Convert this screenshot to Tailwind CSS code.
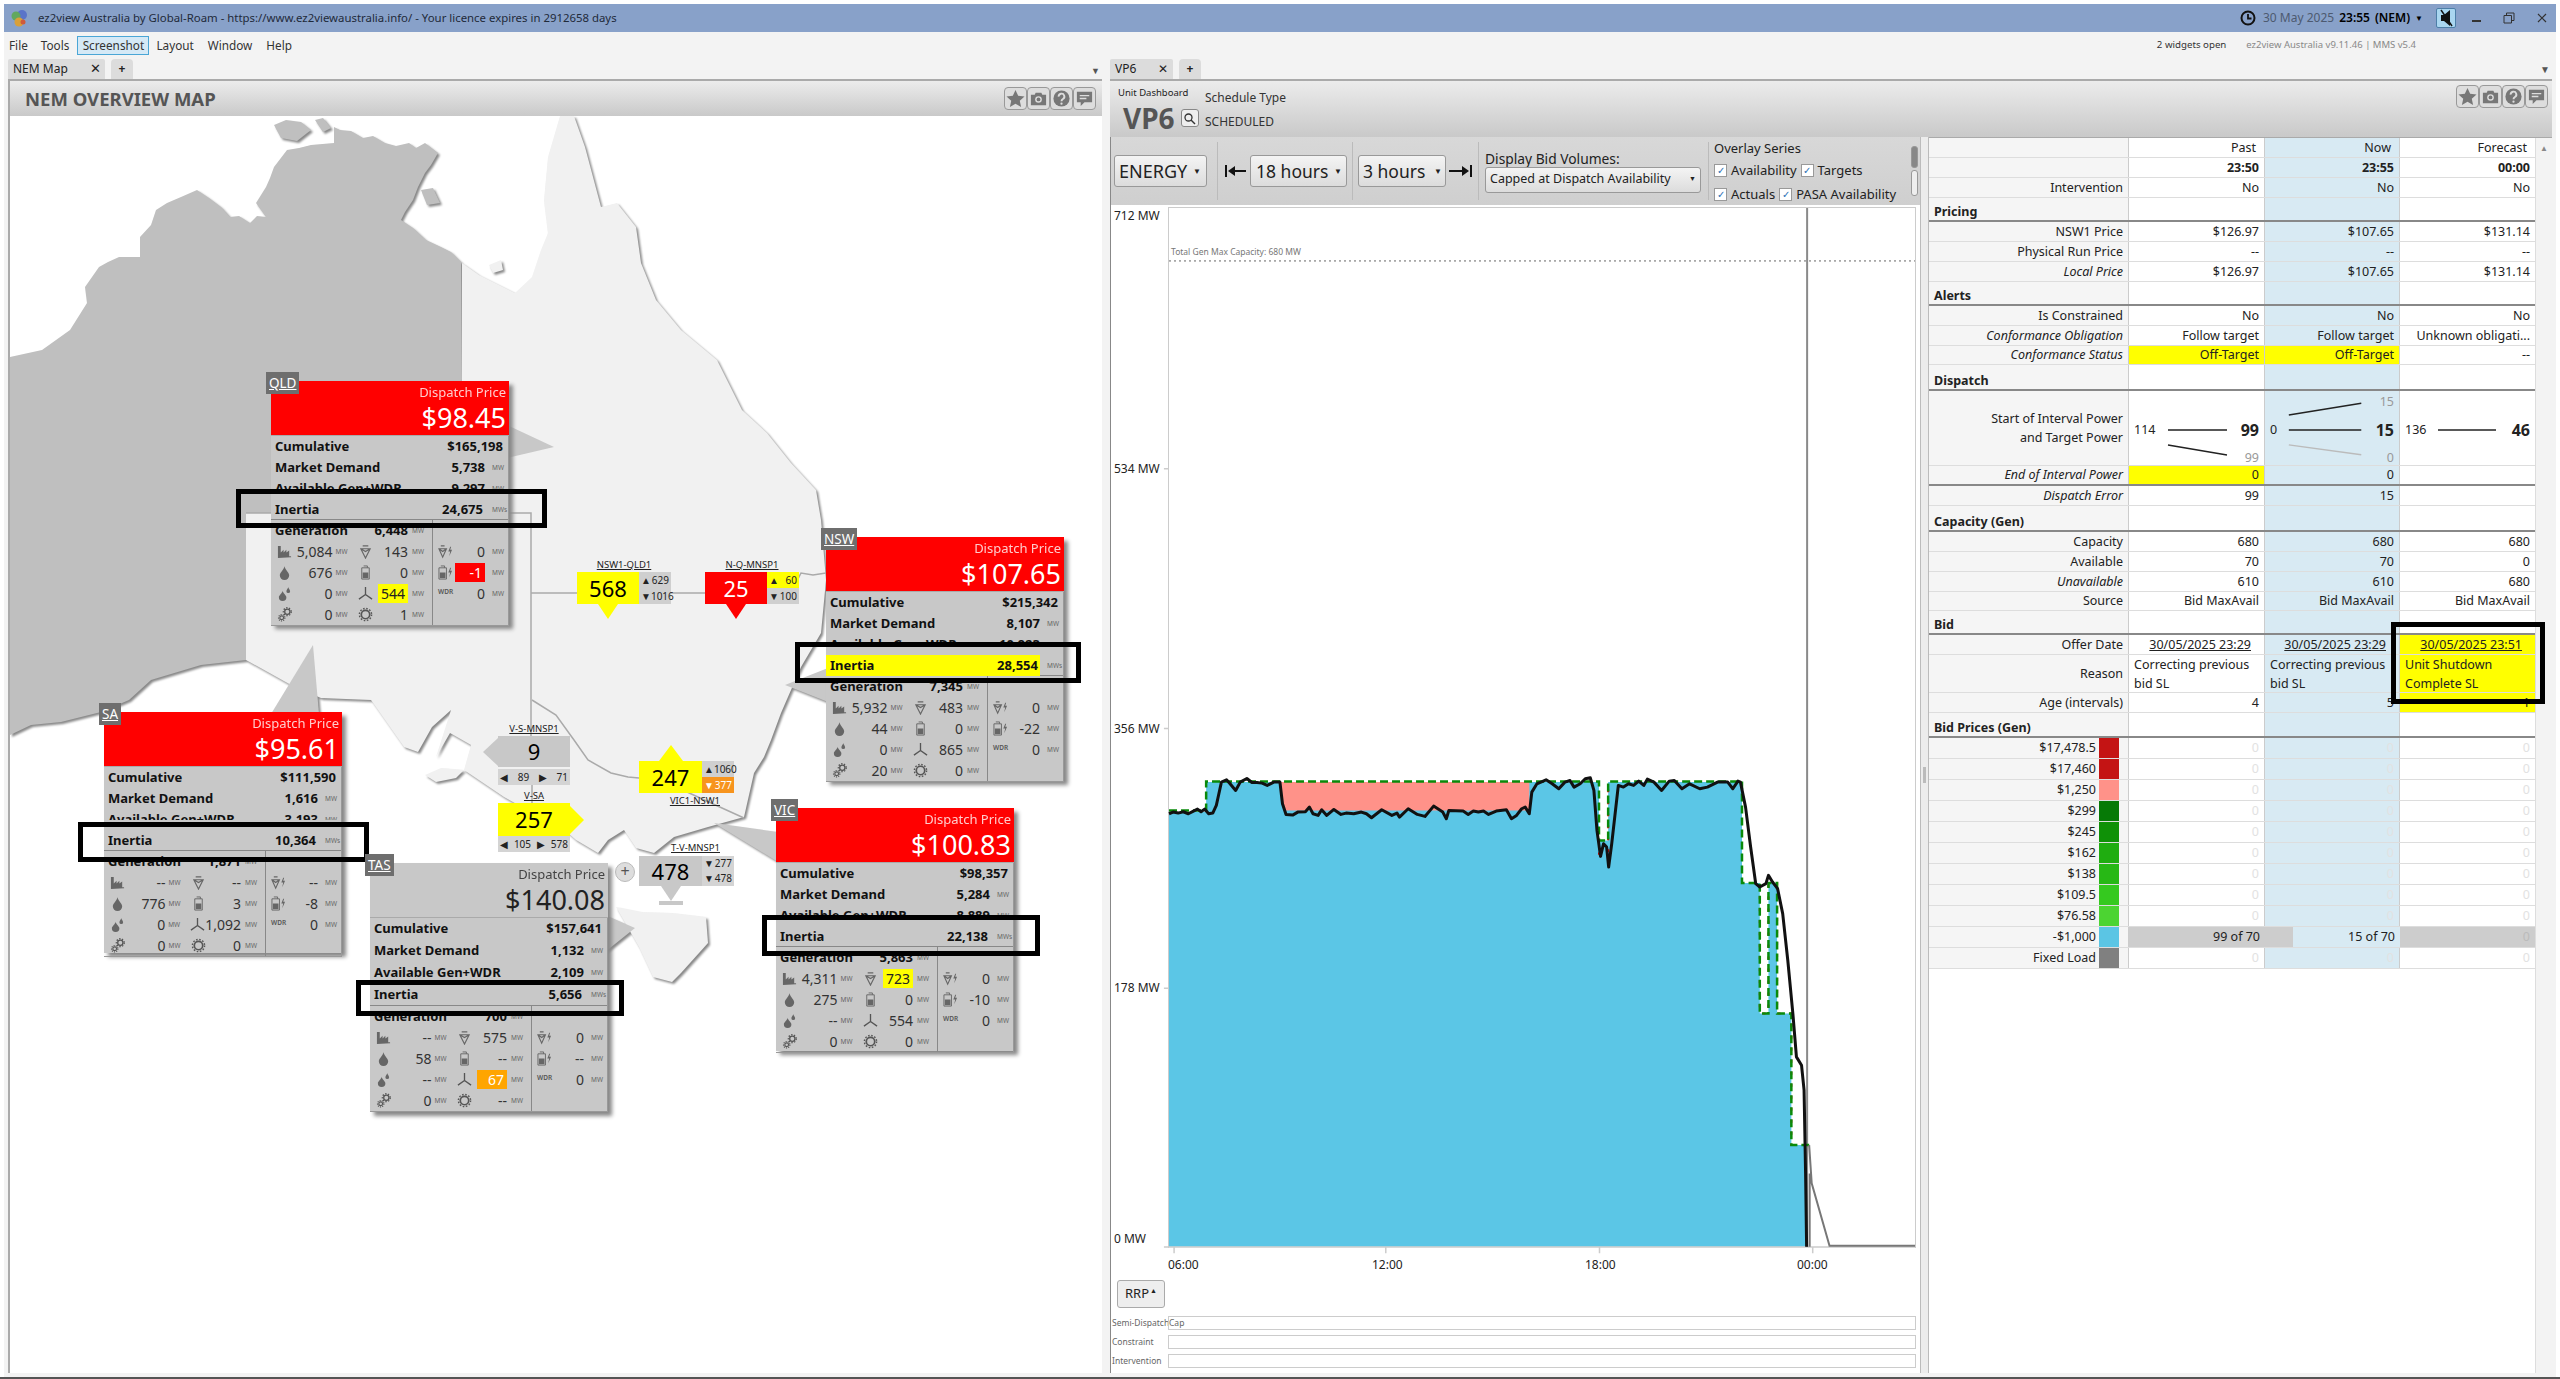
<!DOCTYPE html>
<html lang="en">
<head>
<meta charset="UTF-8">
<title>ez2view Australia</title>
<script src="https://cdn.jsdelivr.net/npm/@tailwindcss/browser@4"></script>
</head>
<body class="w-[2560px] h-[1379px] overflow-hidden bg-white font-['Noto_Sans',sans-serif] text-[#222]">

<!-- shared icons -->
<svg class="hidden">
  <symbol id="i-coal" viewBox="0 0 16 16"><path fill="#666" d="M1 15V2h3v7l3-3v3l3-3v3l3-2v6h2v1z"/></symbol>
  <symbol id="i-ocgt" viewBox="0 0 16 16"><path fill="none" stroke="#666" stroke-width="1.2" d="M3 5h10l-5 10zM3 5l5 3 5-3M5 2h6"/></symbol>
  <symbol id="i-ocgtb" viewBox="0 0 16 16"><path fill="none" stroke="#666" stroke-width="1.2" d="M1 5h8l-4 9zM1 5l4 3 4-3M3 2h4"/><path fill="#666" d="M13 3l-2 5h2l-1 5 3-7h-2l1-3z"/></symbol>
  <symbol id="i-hydro" viewBox="0 0 16 16"><path fill="#666" d="M8 1C8 4 3 8 3 11a5 5 0 0 0 10 0C13 8 8 4 8 1z"/></symbol>
  <symbol id="i-batt" viewBox="0 0 16 16"><path fill="none" stroke="#666" d="M4 3h8v12H4zM6 1h4v2"/><path fill="#666" d="M5 8h6v6H5z"/></symbol>
  <symbol id="i-battb" viewBox="0 0 16 16"><path fill="none" stroke="#666" d="M1 3h8v12H1zM3 1h4v2"/><path fill="#666" d="M2 8h6v6H2z"/><path fill="#666" d="M13 3l-2 5h2l-1 5 3-7h-2l1-3z"/></symbol>
  <symbol id="i-liquid" viewBox="0 0 16 16"><path fill="#666" d="M6 5C6 7 2 10 2 12a4 4 0 0 0 8 0C10 10 6 7 6 5zM12 1c0 1.500-2 3-2 4.500a2 2 0 0 0 4 0C14 4 12 2.500 12 1z"/></symbol>
  <symbol id="i-wind" viewBox="0 0 16 16"><path fill="none" stroke="#555" stroke-width="1.400" d="M8 9V1M8 9l-7 5M8 9l7 5"/></symbol>
  <symbol id="i-gears" viewBox="0 0 16 16"><g fill="none" stroke="#555"><circle cx="11" cy="5" r="2.800" stroke-width="1.400"/><circle cx="11" cy="5" r="4.200" stroke-width="1.400" stroke-dasharray="1.500 1.500"/><circle cx="5" cy="11.500" r="2" stroke-width="1.200"/><circle cx="5" cy="11.500" r="3.400" stroke-width="1.200" stroke-dasharray="1.200 1.200"/></g></symbol>
  <symbol id="i-solar" viewBox="0 0 16 16"><g fill="none" stroke="#555"><circle cx="8" cy="8" r="4.500" stroke-width="1.800"/><circle cx="8" cy="8" r="6.500" stroke-width="1.500" stroke-dasharray="1.700 1.700"/></g></symbol>
  <symbol id="i-star" viewBox="0 0 20 20"><path fill="#777" d="M10 1l2.800 6.200 6.700.7-5 4.500 1.400 6.600L10 15.600 4.100 19l1.400-6.600-5-4.500 6.700-.7z"/></symbol>
  <symbol id="i-cam" viewBox="0 0 20 20"><path fill="#777" d="M2 6h4l1-2h6l1 2h4v11H2z"/><circle cx="10" cy="11" r="3.500" fill="#ddd"/><circle cx="10" cy="11" r="2" fill="#777"/></symbol>
  <symbol id="i-help" viewBox="0 0 20 20"><circle cx="10" cy="10" r="8.500" fill="#777"/><path fill="none" stroke="#ddd" stroke-width="2" d="M7 8a3 3 0 1 1 4.500 2.500c-1 .6-1.500 1-1.500 2.500"/><circle cx="10" cy="15.500" r="1.200" fill="#ddd"/></symbol>
  <symbol id="i-chat" viewBox="0 0 20 20"><path fill="#777" d="M2 3h16v11h-8l-4 4v-4H2z"/><path stroke="#ddd" stroke-width="1.500" d="M5 7h10M5 10h7"/></symbol>
</svg>

<div class="flex flex-col h-full pt-[4px] px-[4px]">

  <!-- title bar -->
  <div class="h-[28px] shrink-0 bg-[#88a1c9] flex items-center pl-[7px] pr-[8px] text-[11.400px] text-[#1f2a3a]">
    <svg class="w-[17px] h-[18px] mr-[10px]" viewBox="0 0 17 18"><circle cx="11" cy="6" r="5" fill="#5a74c9"/><circle cx="5" cy="7" r="4.500" fill="#62a85e"/><circle cx="8" cy="13" r="4.500" fill="#d9a03a"/><circle cx="12" cy="13" r="2.500" fill="#d05a3a"/></svg>
    <span>ez2view Australia by Global-Roam - https://www.ez2viewaustralia.info/ - Your licence expires in 2912658 days</span>
    <div class="ml-auto flex items-center gap-[5px] text-[12px]">
      <svg class="w-[16px] h-[16px] mr-[2px]" viewBox="0 0 16 16"><circle cx="8" cy="8" r="6.500" fill="none" stroke="#111" stroke-width="2"/><path fill="none" stroke="#111" stroke-width="1.800" d="M8 4v4.500h3.500"/></svg>
      <span class="text-[#4d5a70]">30 May 2025</span><span class="font-semibold text-black">23:55</span><span class="font-semibold text-black">(NEM)</span>
      <span class="text-[8px] text-black">▼</span>
      <span class="ml-[8px] w-[20px] h-[20px] bg-[#a9d6f0] border border-[#4d7fa8] rounded-[2px] flex items-center justify-center">
        <svg class="w-[17px] h-[18px]" viewBox="0 0 17 18"><path fill="#111" d="M3 6h3l6-5v16l-6-5H3z"/><path stroke="#111" stroke-width="1.500" d="M3 1l11 16"/></svg>
      </span>
      <svg class="w-[12px] h-[12px] ml-[10px]" viewBox="0 0 12 12"><path stroke="#333" stroke-width="2" d="M1 9h9"/></svg>
      <svg class="w-[12px] h-[12px] ml-[15px]" viewBox="0 0 12 12"><path fill="none" stroke="#333" d="M1 3.500h7.500V11H1zM3.500 3.500V1H11v7.500H8.500"/></svg>
      <svg class="w-[12px] h-[12px] ml-[16px]" viewBox="0 0 12 12"><path stroke="#333" stroke-width="1.200" d="M2 2l8 8M10 2l-8 8"/></svg>
    </div>
  </div>

  <!-- menu bar -->
  <div class="h-[27px] shrink-0 bg-[#f3f3f3] flex items-center pl-[5px] text-[11.750px] text-[#333]">
    <span class="mr-[13px]">File</span>
    <span class="mr-[8px]">Tools</span>
    <span class="w-[72px] h-[19px] flex items-center justify-center bg-[#d5e9f6] border border-[#4aa6d6] mr-[7px]">Screenshot</span>
    <span class="mr-[14px]">Layout</span>
    <span class="mr-[14px]">Window</span>
    <span>Help</span>
    <span class="ml-auto mr-[20px] text-[9.700px]">2 widgets open</span>
    <span class="mr-[140px] text-[9.500px] text-[#888]">ez2view Australia v9.11.46 | MMS v5.4</span>
  </div>

  <!-- work area -->
  <div class="flex-1 flex min-h-0 bg-[#f3f3f3] pl-[4px] gap-[8px]">

    <!-- left widget -->
    <div class="w-[1094px] flex flex-col">
      <div class="h-[20px] shrink-0 flex gap-[6px] text-[12px] relative">
        <div class="w-[97px] bg-[#dcdcdc] rounded-t-[2px] flex items-center justify-between pl-[5px] pr-[4px]"><span>NEM Map</span><span class="text-[13px]">✕</span></div>
        <div class="w-[22px] bg-[#dcdcdc] rounded-t-[4px] flex items-center justify-center font-bold">+</div>
        <span class="absolute right-[2px] top-[5px] text-[9px] text-[#555]">▼</span>
      </div>
      <div class="flex-1 flex flex-col border-l-2 border-t-2 border-[#aaa] min-h-0">
        <div class="h-[35px] shrink-0 bg-gradient-to-b from-[#ececec] to-[#c9c9c9] flex items-center pl-[15px] pr-[6px]">
          <span class="text-[18.500px] font-bold text-[#555]">NEM OVERVIEW MAP</span>
          <div class="ml-auto flex">
            <span class="w-[23px] h-[23px] border border-[#999] rounded-[4px] bg-[#ddd] p-[1px]"><svg class="w-full h-full"><use href="#i-star"/></svg></span>
            <span class="w-[23px] h-[23px] border border-[#999] rounded-[4px] bg-[#ddd] p-[1px]"><svg class="w-full h-full"><use href="#i-cam"/></svg></span>
            <span class="w-[23px] h-[23px] border border-[#999] rounded-[4px] bg-[#ddd] p-[1px]"><svg class="w-full h-full"><use href="#i-help"/></svg></span>
            <span class="w-[23px] h-[23px] border border-[#999] rounded-[4px] bg-[#ddd] p-[1px]"><svg class="w-full h-full"><use href="#i-chat"/></svg></span>
          </div>
        </div>

        <!-- map canvas: everything here sits at map coordinates -->
        <div id="map" class="relative flex-1 bg-white overflow-hidden">
          <svg class="absolute inset-0 w-[1093px] h-[1257px]" viewBox="9 116 1093 1257">
            <g class="drop-shadow-[2px_2px_1px_#888]">
              <path fill="#bfbfbf" d="M461 263 L450 252 L440 247 L425 240 L412 228 L400 220 L404 212 L412 200 L417 187 L424 173 L430 165 L437 153 L424 143 L415 148 L408 143 L395 146 L384 143 L372 136 L362 138 L350 131 L339 130 L333 127 L333 143 L310 145 L298 148 L286 150 L273 167 L269 178 L265 187 L255 203 L265 217 L256 216 L249 223 L238 216 L229 217 L220 207 L208 198 L196 190 L180 197 L166 203 L155 210 L150 225 L139 237 L139 257 L118 257 L107 262 L98 267 L84 287 L86 303 L69 330 L41 350 L9 357 L9 735 L30 725 L60 722 L100 712 L128 700 L150 680 L200 665 L245 660 L245 513 L460 513 L460 263Z"/>
              <path fill="#bfbfbf" d="M273 125 L285 120 L300 122 L310 130 L296 141 L280 138Z M314 120 L322 118 L330 128 L322 132Z M420 190 L432 188 L439 203 L426 205Z"/>
              <path fill="#f1f1f1" d="M461 263 L478 275 L494 283 L514 293 L531 277 L540 250 L547 233 L543 200 L547 157 L559 116 L573 116 L584 147 L592 177 L600 207 L616 203 L635 227 L640 263 L655 300 L680 330 L716 360 L741 410 L766 433 L790 463 L815 490 L820 520 L825 580 L820 633 L800 667 L780 713 L770 740 L763 757 L753 773 L743 817 L707 827 L673 837 L653 853 L635 848 L623 830 L607 840 L597 853 L575 840 L567 833 L503 797 L463 770 L470 745 L449 733 L435 757 L450 710 L431 727 L417 752 L403 747 L370 700 L320 698 L290 685 L245 660 L245 513 L460 513Z"/>
              <path fill="#f1f1f1" d="M424 775 L440 768 L463 770 L455 778 L435 782Z M488 265 L500 260 L502 270 L492 273Z M615 907 L640 912 L671 913 L705 917 L707 943 L680 973 L671 982 L652 977 L638 947Z"/>
              <g fill="#c8c8c8">
                <path d="M506 425 L553 447 L506 458Z"/>
                <path d="M827 668 L784 685 L827 702Z"/>
                <path d="M270 714 L312 645 L318 714Z"/>
                <path d="M604 915 L634 928 L604 952Z"/>
                <path d="M777 832 L713 823 L777 862Z"/>
              </g>
            </g>
            <g fill="none" stroke="#aaa" stroke-width="1.500">
              <path d="M245 513H530V737M531 785V828M530 593H790L800 573L812 575L825 573"/>
              <path d="M531 700L555 715L573 740L587 760L610 773L627 777L660 780L710 803L743 818"/>
            </g>
          </svg>

          <!-- interconnectors -->
          <div class="absolute left-[567px] top-[442px] flex flex-col items-center w-[94px]">
            <span class="text-[9.500px] underline leading-[14px]">NSW1-QLD1</span>
            <div class="flex self-start">
              <div class="flex flex-col items-center"><div class="w-[62px] h-[32px] bg-[#ffff00] text-[22px] leading-[32px] text-center text-black">568</div><div class="w-0 h-0 border-x-[10px] border-x-transparent border-t-[15px] border-t-[#ffff00]"></div></div>
              <div class="w-[32px] h-[32px] bg-[#cfcfcf] text-[10px] leading-[16px]"><div class="flex justify-between px-[2px]"><span>▲</span><span>629</span></div><div class="flex justify-between px-[2px]"><span>▼</span><span>1016</span></div></div>
            </div>
          </div>
          <div class="absolute left-[695px] top-[442px] flex flex-col items-center w-[94px]">
            <span class="text-[9.500px] underline leading-[14px]">N-Q-MNSP1</span>
            <div class="flex self-start">
              <div class="flex flex-col items-center"><div class="w-[62px] h-[32px] bg-[#ff0000] text-[22px] leading-[32px] text-center text-white">25</div><div class="w-0 h-0 border-x-[10px] border-x-transparent border-t-[15px] border-t-[#ff0000]"></div></div>
              <div class="w-[32px] h-[32px] bg-[#cfcfcf] text-[10px] leading-[16px]"><div class="flex justify-between px-[2px] bg-[#ffff00]"><span>▲</span><span>60</span></div><div class="flex justify-between px-[2px]"><span>▼</span><span>100</span></div></div>
            </div>
          </div>
          <div class="absolute left-[473px] top-[606px] flex flex-col items-end w-[87px]">
            <span class="w-[72px] text-center text-[9.500px] underline leading-[14px]">V-S-MNSP1</span>
            <div class="flex items-center"><div class="w-0 h-0 border-y-[14px] border-y-transparent border-r-[15px] border-r-[#c8c8c8]"></div><div class="w-[72px] h-[31px] bg-[#c8c8c8] text-[22px] leading-[31px] text-center text-black">9</div></div>
            <div class="w-[72px] h-[16px] mt-[2px] bg-[#d4d4d4] text-[10px] flex justify-between items-center px-[2px]"><span>◀</span><span>89</span><span>▶</span><span>71</span></div>
          </div>
          <div class="absolute left-[488px] top-[673px] flex flex-col items-start w-[87px]">
            <span class="w-[72px] text-center text-[9.500px] underline leading-[14px]">V-SA</span>
            <div class="flex items-center"><div class="w-[72px] h-[33px] bg-[#ffff00] text-[22px] leading-[33px] text-center text-black">257</div><div class="w-0 h-0 border-y-[14px] border-y-transparent border-l-[14px] border-l-[#ffff00]"></div></div>
            <div class="w-[72px] h-[16px] bg-[#d4d4d4] text-[10px] flex justify-between items-center px-[2px]"><span>◀</span><span>105</span><span>▶</span><span>578</span></div>
          </div>
          <div class="absolute left-[629px] top-[629px] w-[96px] flex flex-col items-start">
            <div class="w-[63px] flex justify-center"><div class="w-0 h-0 border-x-[12px] border-x-transparent border-b-[16px] border-b-[#ffff00]"></div></div>
            <div class="flex">
              <div class="w-[63px] h-[32px] bg-[#ffff00] text-[22px] leading-[32px] text-center text-black">247</div>
              <div class="w-[32px] h-[32px] text-[10px] leading-[16px]"><div class="flex justify-between px-[2px] bg-[#cfcfcf]"><span>▲</span><span>1060</span></div><div class="flex justify-between px-[2px] bg-[#f7941d] text-white"><span>▼</span><span>377</span></div></div>
            </div>
            <span class="w-[96px] text-right pr-[15px] text-[9.500px] underline leading-[16px]">VIC1-NSW1</span>
          </div>
          <div class="absolute left-[605px] top-[746px] w-[20px] h-[20px] rounded-full bg-[#ddd] border border-[#bbb] text-[16px] leading-[17px] text-center text-[#555]">+</div>
          <div class="absolute left-[629px] top-[724px] w-[96px] flex flex-col items-start">
            <span class="w-[96px] text-right pr-[15px] text-[9.500px] underline leading-[16px]">T-V-MNSP1</span>
            <div class="flex">
              <div class="w-[63px] h-[30px] bg-[#c8c8c8] text-[22px] leading-[30px] text-center text-black">478</div>
              <div class="w-[32px] text-[10px] leading-[15px]"><div class="flex justify-between px-[2px] bg-[#d4d4d4]"><span>▼</span><span>277</span></div><div class="flex justify-between px-[2px] bg-[#d4d4d4]"><span>▼</span><span>478</span></div></div>
            </div>
            <div class="w-[63px] flex justify-center"><div class="w-0 h-0 border-x-[10px] border-x-transparent border-t-[15px] border-t-[#c8c8c8]"></div></div>
            <div class="w-[63px] flex justify-center"><div class="w-[24px] h-[4px] bg-[#c8c8c8]"></div></div>
          </div>

          <div id="cards"></div>

          <!-- annotation rectangles drawn over the screenshot -->
          <div class="absolute left-[226px] top-[373px] w-[311px] h-[39px] border-[5px] border-black"></div>
          <div class="absolute left-[785px] top-[526px] w-[286px] h-[41px] border-[5px] border-black"></div>
          <div class="absolute left-[68px] top-[706px] w-[291px] h-[40px] border-[5px] border-black"></div>
          <div class="absolute left-[346px] top-[864px] w-[268px] h-[36px] border-[5px] border-black"></div>
          <div class="absolute left-[752px] top-[799px] w-[278px] h-[41px] border-[5px] border-black"></div>
        </div>
      </div>
    </div>

    <!-- right widget -->
    <div class="w-[1442px] flex flex-col relative">
      <div class="h-[20px] shrink-0 flex gap-[6px] text-[12px]">
        <div class="w-[63px] bg-[#dcdcdc] rounded-t-[2px] flex items-center justify-between pl-[5px] pr-[5px]"><span>VP6</span><span>✕</span></div>
        <div class="w-[22px] bg-[#dcdcdc] rounded-t-[4px] flex items-center justify-center font-bold">+</div>
      </div>
      <span class="absolute right-[2px] top-[3px] text-[10px] text-[#555]">▼</span>

      <div class="h-[58px] shrink-0 border-t-2 border-[#aaa] bg-gradient-to-b from-[#ececec] to-[#c9c9c9] flex pl-[8px] pr-[4px]">
        <div class="w-[87px] flex flex-col">
          <span class="text-[9.500px] leading-[12px] mt-[6px]">Unit Dashboard</span>
          <div class="flex items-center mt-[4px] ml-[5px]">
            <span class="text-[28px] leading-[30px] font-bold text-[#555]">VP6</span>
            <span class="ml-[6px] w-[18px] h-[18px] border border-[#888] rounded-[3px] bg-[#eee] flex items-center justify-center"><svg class="w-[13px] h-[13px]" viewBox="0 0 13 13"><circle cx="5.500" cy="5.500" r="3.500" fill="none" stroke="#333" stroke-width="1.300"/><path stroke="#333" stroke-width="1.500" d="M8 8l4 4"/></svg></span>
          </div>
        </div>
        <div class="flex flex-col text-[12px] text-[#333] pt-[8px] gap-[7px]">
          <span class="leading-[17px]">Schedule Type</span>
          <span class="leading-[17px]">SCHEDULED</span>
        </div>
        <div class="ml-auto flex h-[23px] mt-[4px]">
          <span class="w-[23px] h-[23px] border border-[#999] rounded-[4px] bg-[#ddd] p-[1px]"><svg class="w-full h-full"><use href="#i-star"/></svg></span>
          <span class="w-[23px] h-[23px] border border-[#999] rounded-[4px] bg-[#ddd] p-[1px]"><svg class="w-full h-full"><use href="#i-cam"/></svg></span>
          <span class="w-[23px] h-[23px] border border-[#999] rounded-[4px] bg-[#ddd] p-[1px]"><svg class="w-full h-full"><use href="#i-help"/></svg></span>
          <span class="w-[23px] h-[23px] border border-[#999] rounded-[4px] bg-[#ddd] p-[1px]"><svg class="w-full h-full"><use href="#i-chat"/></svg></span>
        </div>
      </div>

      <div class="flex-1 flex min-h-0">
        <!-- chart column -->
        <div class="w-[810px] flex flex-col border-l border-[#888] bg-white">
          <div class="h-[68px] shrink-0 bg-gradient-to-b from-[#d8d8d8] to-[#cfcfcf] flex items-center pl-[3px] text-[#222]">
            <div class="w-[93px] h-[32px] border border-[#999] rounded-[3px] bg-gradient-to-b from-[#f4f4f4] to-[#dcdcdc] flex items-center justify-between pl-[4px] pr-[5px] text-[18px]"><span>ENERGY</span><span class="text-[8px]">▼</span></div>
            <div class="w-px h-[58px] bg-[#bbb] ml-[10px] mr-[7px]"></div>
            <svg class="w-[22px] h-[14px] mr-[3px]" viewBox="0 0 22 14"><path stroke="#111" stroke-width="2" d="M1 1v12M6 7h15"/><path fill="#111" d="M3 7l7-5v10z"/></svg>
            <div class="w-[97px] h-[32px] border border-[#999] rounded-[3px] bg-gradient-to-b from-[#f4f4f4] to-[#dcdcdc] flex items-center justify-between pl-[5px] pr-[4px] text-[17.500px]"><span>18 hours</span><span class="text-[8px]">▼</span></div>
            <div class="w-px h-[58px] bg-[#bbb] mx-[5px]"></div>
            <div class="w-[88px] h-[32px] border border-[#999] rounded-[3px] bg-gradient-to-b from-[#f4f4f4] to-[#dcdcdc] flex items-center justify-between pl-[4px] pr-[3px] text-[17.500px]"><span>3 hours</span><span class="text-[8px]">▼</span></div>
            <svg class="w-[24px] h-[14px] ml-[2px]" viewBox="0 0 24 14"><path stroke="#111" stroke-width="2" d="M23 1v12M1 7h15"/><path fill="#111" d="M21 7l-7-5v10z"/></svg>
            <div class="w-px h-[58px] bg-[#bbb] ml-[6px] mr-[6px]"></div>
            <div class="w-[218px] flex flex-col">
              <span class="text-[13.800px] leading-[17px]">Display Bid Volumes:</span>
              <div class="w-[216px] h-[26px] border border-[#999] rounded-[3px] bg-gradient-to-b from-[#f4f4f4] to-[#dcdcdc] flex items-center justify-between px-[4px] text-[12.500px]"><span>Capped at Dispatch Availability</span><span class="text-[7px]">▼</span></div>
            </div>
            <div class="w-px h-[58px] bg-[#bbb] ml-[5px] mr-[5px]"></div>
            <div class="flex flex-col text-[13px] leading-[17px]">
              <span class="mb-[5px]">Overlay Series</span>
              <div class="flex items-center gap-[4px] mb-[7px]"><span class="w-[13px] h-[13px] border border-[#999] bg-white text-[10px] leading-[11px] text-center text-[#2a6fb5]">✓</span><span>Availability</span><span class="w-[13px] h-[13px] border border-[#999] bg-white text-[10px] leading-[11px] text-center text-[#2a6fb5]">✓</span><span>Targets</span></div>
              <div class="flex items-center gap-[4px]"><span class="w-[13px] h-[13px] border border-[#999] bg-white text-[10px] leading-[11px] text-center text-[#2a6fb5]">✓</span><span>Actuals</span><span class="w-[13px] h-[13px] border border-[#999] bg-white text-[10px] leading-[11px] text-center text-[#2a6fb5]">✓</span><span class="whitespace-nowrap">PASA Availability</span></div>
            </div>
            <div class="ml-auto mr-[2px] w-[7px] h-[50px] flex flex-col gap-[2px]"><div class="h-[22px] border border-[#999] rounded-[3px] bg-[#888]"></div><div class="h-[26px] border border-[#999] rounded-[3px] bg-[#eee]"></div></div>
          </div>

          <div class="flex h-[1041px] mt-[2px] pl-[3px] shrink-0">
            <div class="w-[54px] flex flex-col text-[12px] leading-[18px] text-[#222]">
              <span class="h-[253px]">712 MW</span><span class="h-[260px]">534 MW</span><span class="h-[260px]">356 MW</span><span class="h-[251px]">178 MW</span><span>0 MW</span>
            </div>
            <div class="relative w-[748px] h-[1041px] border-l border-t border-r border-[#ccc]">
              <svg class="absolute inset-0 w-full h-full overflow-visible" viewBox="52 -1599 1466 3123" preserveAspectRatio="none">
                <path fill="#5bc6e6" d="M52 215H125V125H897V300H915V125H1178V428H1213V820H1230V428H1247V820H1275V1215H1300L1306 1520H52Z"/>
                <path fill="#ff9289" d="M272 125H760V210H278Z"/>
                <path fill="none" stroke="#ccc" stroke-width="1.500" vector-effect="non-scaling-stroke" d="M62 1520V1540M478 1520V1540M898 1520V1540M1317 1520V1540M42 1521H1518M42 -816H52M42 -36H52M42 744H52"/>
                <path fill="none" stroke="#666" stroke-width="1" stroke-dasharray="2 3" vector-effect="non-scaling-stroke" d="M52 -1440H1518"/>
                <path fill="none" stroke="#8a8a8a" stroke-width="2" vector-effect="non-scaling-stroke" d="M1306 -1599V1520"/>
                <path fill="none" stroke="#e00" stroke-width="2" stroke-dasharray="3 9" vector-effect="non-scaling-stroke" d="M897 300V340H915V125M1178 125V428H1213V820H1230V428H1247V820H1275V1215H1300"/>
                <path fill="none" stroke="#0a8a0a" stroke-width="2.500" stroke-dasharray="8 4" vector-effect="non-scaling-stroke" d="M52 210H125V123H897V300H915V123H1178V428H1213V820H1230V428H1247V820H1275V1215H1310"/>
                <path fill="none" stroke="#777" stroke-width="2" vector-effect="non-scaling-stroke" d="M1310 1215L1315 1330L1350 1517H1518M1311 1300V1520"/>
                <path fill="none" stroke="#111" stroke-width="3" stroke-linejoin="round" vector-effect="non-scaling-stroke" d="M52 220L60 215L70 218L80 214L90 220L100 212L108 206L115 214L122 206L130 220L138 218L145 195L150 160L155 125L165 118L172 130L183 150L192 125L205 114L215 126L225 126L235 128L245 135L258 125L270 125L275 190L282 222L295 224L305 215L320 214L328 200L335 220L345 225L352 208L362 225L376 207L390 222L400 218L415 220L430 215L440 220L450 232L470 208L490 225L500 218L505 230L522 205L540 222L555 228L572 197L590 215L597 235L602 210L630 212L640 222L650 212L660 215L670 212L680 222L695 212L715 208L725 235L735 225L745 205L752 200L760 220L765 155L775 130L793 118L805 130L818 145L830 125L840 120L848 140L860 130L870 115L880 112L887 150L893 270L900 348L906 310L912 320L916 380L922 310L935 135L945 140L955 130L965 135L975 122L985 135L992 116L1005 125L1020 150L1035 122L1045 120L1060 145L1075 130L1095 145L1110 140L1130 125L1150 125L1160 145L1170 122L1175 125L1185 200L1195 320L1205 430L1213 440L1225 430L1230 405L1238 425L1248 445L1258 520L1268 660L1278 820L1285 950L1295 975L1300 1050L1303 1300L1305 1520"/>
              </svg>
              <span class="absolute left-[2px] top-[38px] text-[8.500px] text-[#777]">Total Gen Max Capacity: 680 MW</span>
            </div>
          </div>

          <div class="pl-[57px] mt-[8px] h-[20px] shrink-0 flex text-[12px] leading-[18px]">
            <span class="w-[204px]">06:00</span><span class="w-[213px]">12:00</span><span class="w-[212px]">18:00</span><span>00:00</span>
          </div>
          <div class="pl-[6px] mt-[4px] shrink-0"><div class="w-[48px] h-[28px] border border-[#aaa] rounded-[3px] bg-[#eee] flex items-center justify-center text-[13px] gap-[1px]"><span>RRP</span><span class="text-[7px] mb-[5px]">▲</span></div></div>
          <div class="mt-[8px] pl-[1px] flex flex-col gap-[5px] text-[8.500px] text-[#666] shrink-0">
            <div class="flex items-center h-[14px]"><span class="w-[56px] whitespace-nowrap">Semi-Dispatch</span><span class="w-[748px] h-[14px] border border-[#ccc] leading-[12px]">Cap</span></div>
            <div class="flex items-center h-[14px]"><span class="w-[56px]">Constraint</span><span class="w-[748px] h-[14px] border border-[#ccc]"></span></div>
            <div class="flex items-center h-[14px]"><span class="w-[56px]">Intervention</span><span class="w-[748px] h-[14px] border border-[#ccc]"></span></div>
          </div>
        </div>

        <!-- splitter -->
        <div class="w-[9px] bg-[#ececec] border-l border-[#bbb] border-r flex items-center justify-center"><div class="w-[3px] h-[16px] bg-[#bbb] mt-[40px]"></div></div>

        <!-- detail table -->
        <div class="relative w-[623px] flex bg-white border-t border-[#aaa] text-[12.500px] text-[#222]">
          <div id="table" class="w-[606px] shrink-0"></div>
          <div class="flex-1 border-l border-[#ddd] bg-[#f3f3f3] text-center text-[8px] text-[#888] pt-[4px]">▲</div>
          <div class="absolute left-[462px] top-[484px] w-[154px] h-[82px] border-[5px] border-black"></div>
        </div>
      </div>
    </div>
  </div>

  <div class="h-[6px] shrink-0 bg-[#f3f3f3]"></div>
</div>
<div class="absolute left-0 top-[1377px] w-full h-[2px] bg-[#555]"></div>

<script>
  // region cards
  var cards = [
    { tag: 'QLD', pos: 'left-[261px] top-[265px] h-[244px]', head: 'bg-[#ff0000] text-white', price: '$98.45', cum: '$165,198', md: '5,738', av: '9,297', ine: '24,675', gen: '6,448',
      v: ['5,084', '143', '0', '676', '0', '-1', '0', '544', '0', '0', '1'], hi: { 5: 'red', 7: 'yellow' } },
    { tag: 'NSW', pos: 'left-[816px] top-[421px] h-[244px]', head: 'bg-[#ff0000] text-white', price: '$107.65', cum: '$215,342', md: '8,107', av: '10,923', ine: '28,554', ineHi: true, gen: '7,345',
      v: ['5,932', '483', '0', '44', '0', '-22', '0', '865', '0', '20', '0'], hi: {} },
    { tag: 'SA', pos: 'left-[94px] top-[596px] h-[241px]', head: 'bg-[#ff0000] text-white', price: '$95.61', cum: '$111,590', md: '1,616', av: '3,193', ine: '10,364', gen: '1,871',
      v: ['--', '--', '--', '776', '3', '-8', '0', '1,092', '0', '0', '0'], hi: {} },
    { tag: 'TAS', tall: true, pos: 'left-[360px] top-[747px] h-[249px]', head: 'bg-[#c8c8c8] text-[#222]', price: '$140.08', cum: '$157,641', md: '1,132', av: '2,109', ine: '5,656', gen: '700',
      v: ['--', '575', '0', '58', '--', '--', '--', '67', '0', '0', '--'], hi: { 7: 'orange' } },
    { tag: 'VIC', pos: 'left-[766px] top-[692px] h-[243px]', head: 'bg-[#ff0000] text-white', price: '$100.83', cum: '$98,357', md: '5,284', av: '8,889', ine: '22,138', gen: '5,863',
      v: ['4,311', '723', '0', '275', '0', '-10', '--', '554', '0', '0', '0'], hi: { 1: 'yellow' } }
  ];

  function icon(name) {
    return '<svg class="w-[15px] h-[15px] shrink-0"><use href="#i-' + name + '"/></svg>';
  }

  function val(c, i) {
    var h = c.hi[i], t = c.v[i];
    if (h === 'red') return '<span class="w-[30px] h-[19px] bg-[#ff0000] text-white text-right pr-[3px] leading-[19px]">' + t + '</span>';
    if (h === 'yellow') return '<span class="w-[30px] h-[19px] bg-[#ffff00] text-[#222] text-right pr-[3px] leading-[19px]">' + t + '</span>';
    if (h === 'orange') return '<span class="w-[30px] h-[19px] bg-[#ffa500] text-white text-right pr-[3px] leading-[19px]">' + t + '</span>';
    return '<span>' + t + '</span>';
  }

  // left pair of columns: narrow unit gap first, wider second
  function cellA(ic, c, i) {
    return '<div class="w-[81px] h-[21px] flex items-center pl-[6px]">' + icon(ic) + '<div class="flex-1 flex justify-end">' + val(c, i) + '</div><span class="w-[19px] pl-[3px] text-[6.500px] text-[#666]">MW</span></div>';
  }
  function cellB(ic, c, i) {
    return '<div class="w-[81px] h-[21px] flex items-center pl-[6px]">' + icon(ic) + '<div class="flex-1 flex justify-end">' + val(c, i) + '</div><span class="w-[24px] pl-[4px] text-[6.500px] text-[#666]">MW</span></div>';
  }
  function cellC(ic, c, i) {
    return '<div class="h-[21px] flex items-center pl-[5px]">' + ic + '<div class="flex-1 flex justify-end">' + val(c, i) + '</div><span class="w-[23px] pl-[7px] text-[6.500px] text-[#666]">MW</span></div>';
  }

  function row(label, value, unit, tall) {
    return '<div class="' + (tall ? 'h-[22px]' : 'h-[21px]') + ' flex items-center pl-[4px] pr-[5px]"><span class="flex-1">' + label + '</span><span>' + value + '</span>' +
      (unit ? '<span class="w-[18px] pl-[7px] text-[6.500px] font-normal text-[#666]">' + unit + '</span>' : '') + '</div>';
  }

  document.getElementById('cards').innerHTML = cards.map(function (c) {
    var ineBg = c.ineHi ? 'bg-[#ffff00]' : '';
    // the inertia row covers the lower half of the row above it, except on the TAS card
    var ineBox = c.tall ? 'h-[22px] border-b border-[#888]' : 'relative h-[31px] -mt-[10px] bg-[#c8c8c8] pt-[10px] border-b border-[#888]';
    return '<div class="absolute ' + c.pos + ' w-[238px] bg-[#c8c8c8] text-[#111] shadow-[4px_4px_4px_#888] text-[14px]">' +
      '<span class="absolute -left-[5px] -top-[9px] h-[22px] px-[3px] bg-[#6e6e6e] text-white underline text-[13.500px] leading-[22px] z-10">' + c.tag + '</span>' +
      '<div class="h-[55px] ' + c.head + ' flex flex-col items-end pr-[3px] pt-[2px] border-b border-[#aaa]"><span class="text-[13px] leading-[18px] opacity-80">Dispatch Price</span><span class="text-[27px] leading-[34px]">' + c.price + '</span></div>' +
      '<div class="font-bold text-[13px] border-r border-[#999]">' +
        row('Cumulative', c.cum, '', c.tall) + row('Market Demand', c.md, 'MW', c.tall) + row('Available Gen+WDR', c.av, 'MW', c.tall) +
        '<div class="' + ineBox + '"><div class="h-[21px] flex items-center pl-[4px] pr-[5px]"><div class="flex-1 flex items-center justify-between ' + ineBg + ' -ml-[4px] pl-[4px] pr-[2px] h-[21px]"><span>Inertia</span><span>' + c.ine + '</span></div><span class="w-[18px] pl-[7px] text-[6.500px] font-normal text-[#666]">MWs</span></div></div>' +
      '</div>' +
      '<div class="flex font-normal text-[#333] border-r border-b border-[#999]">' +
        '<div class="w-[162px] border-r border-[#888]">' +
          '<div class="h-[21px] flex items-center pl-[4px] font-bold text-[13px] text-[#111]"><span class="flex-1">Generation</span><span>' + c.gen + '</span><span class="w-[24px] pl-[4px] text-[6.500px] font-normal text-[#666]">MW</span></div>' +
          '<div class="flex">' + cellA('coal', c, 0) + cellB('ocgt', c, 1) + '</div>' +
          '<div class="flex">' + cellA('hydro', c, 3) + cellB('batt', c, 4) + '</div>' +
          '<div class="flex">' + cellA('liquid', c, 6) + cellB('wind', c, 7) + '</div>' +
          '<div class="flex">' + cellA('gears', c, 9) + cellB('solar', c, 10) + '</div>' +
        '</div>' +
        '<div class="flex-1"><div class="h-[21px]"></div>' + cellC(icon('ocgtb'), c, 2) + cellC(icon('battb'), c, 5) +
          '<div class="h-[21px] flex items-center pl-[5px]"><span class="text-[6.500px] font-semibold text-[#555] -mt-[4px]">WDR</span><div class="flex-1 text-right">0</div><span class="w-[23px] pl-[7px] text-[6.500px] text-[#666]">MW</span></div>' +
        '</div>' +
      '</div>' +
    '</div>';
  }).join('');

  // detail table: height, label, past, now, forecast
  var line = 'border-b border-[#ddd]';
  var faint = 'text-[#e2e2e2]';

  function tr(h, label, a, b, c, o) {
    o = o || {};
    var lab = o.italic ? 'italic' : '';
    return '<div class="flex ' + h + ' ' + line + '">' +
      '<div class="w-[200px] bg-[#f5f5f5] border-r border-[#ccc] flex items-center justify-end pr-[5px] pt-[1px] ' + lab + '">' + label + '</div>' +
      '<div class="w-[136px] border-r border-[#ccc] flex items-center justify-end pr-[5px] pt-[1px] ' + (o.yA ? 'bg-[#ffff00]' : 'bg-white') + ' ' + (o.cls || '') + '">' + a + '</div>' +
      '<div class="w-[135px] border-r border-[#ccc] flex items-center justify-end pr-[5px] pt-[1px] ' + (o.yB ? 'bg-[#ffff00]' : 'bg-[#d8eaf3]') + ' ' + (o.cls || '') + '">' + b + '</div>' +
      '<div class="w-[135px] flex items-center justify-end pr-[5px] pt-[1px] ' + (o.yC ? 'bg-[#ffff00]' : 'bg-white') + ' ' + (o.cls || '') + '">' + c + '</div>' +
    '</div>';
  }

  function section(h, label) {
    return '<div class="flex ' + h + ' border-b-2 border-[#888]">' +
      '<div class="w-[200px] bg-[#f5f5f5] border-r border-[#ccc] flex items-end pl-[5px] font-bold text-[12.500px] leading-[17px]">' + label + '</div>' +
      '<div class="w-[136px] bg-white border-r border-[#ccc]"></div><div class="w-[135px] bg-[#d8eaf3] border-r border-[#ccc]"></div><div class="w-[135px] bg-white"></div></div>';
  }

  function price(label, swatch) {
    var zero = '<span class="' + faint + '">0</span>';
    return '<div class="flex h-[21px] border-b border-[#ddd]">' +
      '<div class="w-[200px] bg-[#f5f5f5] border-r border-[#ccc] flex items-center justify-end pr-[9px]"><span class="pr-[3px]">' + label + '</span><span class="w-[20px] h-[20px] ' + swatch + '"></span></div>' +
      '<div class="w-[136px] bg-white border-r border-[#ccc] flex items-center justify-end pr-[5px]">' + zero + '</div>' +
      '<div class="w-[135px] bg-[#d8eaf3] border-r border-[#ccc] flex items-center justify-end pr-[5px]">' + zero + '</div>' +
      '<div class="w-[135px] bg-white flex items-center justify-end pr-[5px]">' + zero + '</div></div>';
  }

  // mini chart cell values are placed over a small line drawing
  function dispatchCell(bg, start, big, top, bottom, lines) {
    return '<div class="relative w-[135px] h-full border-r border-[#ccc] ' + bg + '">' +
      '<svg class="absolute inset-0 w-full h-full" viewBox="0 0 135 74">' + lines + '</svg>' +
      '<span class="absolute left-[5px] top-[30px] text-[12.500px] leading-[18px]">' + start + '</span>' +
      '<span class="absolute right-[5px] top-[28px] text-[16px] leading-[22px] font-bold">' + big + '</span>' +
      (top ? '<span class="absolute right-[5px] top-[2px] leading-[18px] text-[#999]">' + top + '</span>' : '') +
      (bottom ? '<span class="absolute right-[5px] top-[58px] leading-[18px] text-[#999]">' + bottom + '</span>' : '') +
    '</div>';
  }

  var html = '';
  html += tr('h-[20px]', '', 'Past', 'Now', 'Forecast', { cls: 'pr-[8px]' });
  html += tr('h-[20px]', '', '<b>23:50</b>', '<b>23:55</b>', '<b>00:00</b>');
  html += tr('h-[20px]', 'Intervention', 'No', 'No', 'No');
  html += section('h-[24px]', 'Pricing');
  html += tr('h-[20px]', 'NSW1 Price', '$126.97', '$107.65', '$131.14');
  html += tr('h-[20px]', 'Physical Run Price', '--', '--', '--');
  html += tr('h-[20px]', 'Local Price', '$126.97', '$107.65', '$131.14', { italic: true });
  html += section('h-[24px]', 'Alerts');
  html += tr('h-[20px]', 'Is Constrained', 'No', 'No', 'No');
  html += tr('h-[20px]', 'Conformance Obligation', 'Follow target', 'Follow target', '<span class="whitespace-nowrap">Unknown obligati...</span>', { italic: true });
  html += tr('h-[19px]', 'Conformance Status', 'Off-Target', 'Off-Target', '--', { italic: true, yA: true, yB: true });
  html += section('h-[26px]', 'Dispatch');
  html += '<div class="flex h-[75px] ' + line + '">' +
    '<div class="w-[200px] bg-[#f5f5f5] border-r border-[#ccc] flex items-center justify-end pr-[5px] text-right leading-[19px]"><span>Start of Interval Power<br>and Target Power</span></div>' +
    dispatchCell('bg-white w-[136px]', '114', '99', '', '99', '<path stroke="#222" stroke-width="1.500" d="M39 39H98M39 54L98 64"/>') +
    dispatchCell('bg-[#d8eaf3]', '0', '15', '15', '0', '<path stroke="#222" stroke-width="1.500" d="M24 24L97 12M24 39H97"/><path stroke="#bbb" stroke-width="1.500" d="M24 54L97 64"/>') +
    dispatchCell('bg-white border-r-0', '136', '46', '', '', '<path stroke="#222" stroke-width="1.500" d="M38 39H96"/>') +
  '</div>';
  html += tr('h-[20px] !border-b-2 !border-[#888]', 'End of Interval Power', '0', '0', '', { italic: true, yA: true });
  html += tr('h-[20px]', 'Dispatch Error', '99', '15', '', { italic: true });
  html += section('h-[26px]', 'Capacity (Gen)');
  html += tr('h-[20px]', 'Capacity', '680', '680', '680');
  html += tr('h-[20px]', 'Available', '70', '70', '0');
  html += tr('h-[20px]', 'Unavailable', '610', '610', '680', { italic: true });
  html += tr('h-[19px]', 'Source', 'Bid MaxAvail', 'Bid MaxAvail', 'Bid MaxAvail');
  html += section('h-[24px]', 'Bid');
  html += tr('h-[20px]', 'Offer Date', '<u>30/05/2025 23:29</u>', '<u>30/05/2025 23:29</u>', '<u>30/05/2025 23:51</u>', { yC: true, cls: 'pr-[13px]' });
  html += '<div class="flex h-[38px] ' + line + ' leading-[19px]">' +
    '<div class="w-[200px] bg-[#f5f5f5] border-r border-[#ccc] flex items-center justify-end pr-[5px]">Reason</div>' +
    '<div class="w-[136px] bg-white border-r border-[#ccc] pl-[5px] whitespace-nowrap overflow-hidden">Correcting previous<br>bid SL</div>' +
    '<div class="w-[135px] bg-[#d8eaf3] border-r border-[#ccc] pl-[5px] whitespace-nowrap overflow-hidden">Correcting previous<br>bid SL</div>' +
    '<div class="w-[135px] bg-[#ffff00] pl-[5px] whitespace-nowrap overflow-hidden">Unit Shutdown<br>Complete SL</div></div>';
  html += tr('h-[20px]', 'Age (intervals)', '4', '5', '1', { yC: true });
  html += section('h-[25px]', 'Bid Prices (Gen)');
  html += price('$17,478.5', 'bg-[#c41414]');
  html += price('$17,460', 'bg-[#c41414]');
  html += price('$1,250', 'bg-[#ff9289]');
  html += price('$299', 'bg-[#067a06]');
  html += price('$245', 'bg-[#0f9107]');
  html += price('$162', 'bg-[#1fad10]');
  html += price('$138', 'bg-[#27b815]');
  html += price('$109.5', 'bg-[#35c91f]');
  html += price('$76.58', 'bg-[#4cd432]');
  html += '<div class="flex h-[21px] border-b border-[#ddd]">' +
    '<div class="w-[200px] bg-[#f5f5f5] border-r border-[#ccc] flex items-center justify-end pr-[9px]"><span class="pr-[3px]">-$1,000</span><span class="w-[20px] h-[20px] bg-[#5bc5e4]"></span></div>' +
    '<div class="w-[136px] bg-[#cdcdcd] flex items-center justify-end pr-[5px]">99 of 70</div>' +
    '<div class="relative w-[135px] bg-[#d8eaf3] flex items-center justify-end pr-[5px]"><span class="absolute left-0 top-0 w-[28px] h-full bg-[#cdcdcd]"></span>15 of 70</div>' +
    '<div class="w-[135px] bg-[#cdcdcd] flex items-center justify-end pr-[5px] text-[#bbb]">0</div></div>';
  html += price('Fixed Load', 'bg-[#808080]');
  document.getElementById('table').innerHTML = html;
</script>
</body>
</html>
